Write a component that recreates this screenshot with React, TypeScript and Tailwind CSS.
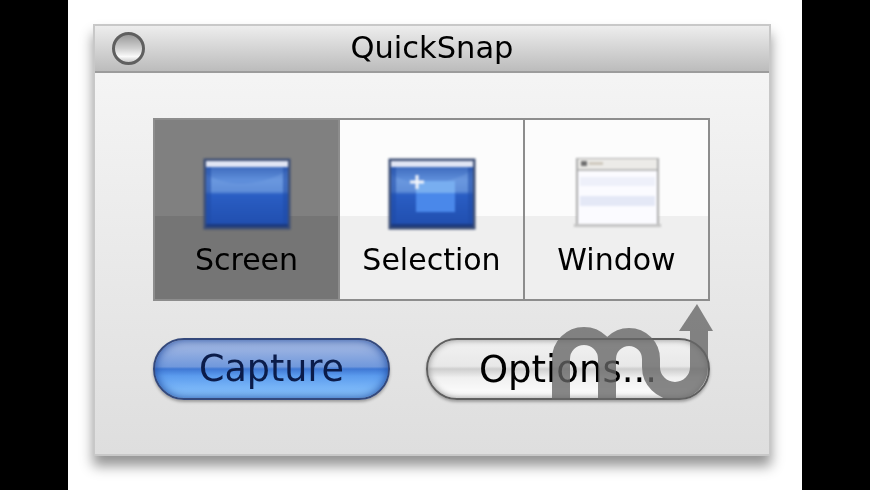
import { memo } from 'react'

const labelFont = "font-['DejaVu_Sans',sans-serif]"

type IconProps = { id: string; selection?: boolean }

const ScreenIcon = memo(({ id, selection }: IconProps) => (
    <svg width="88" height="72" viewBox="0 0 88 72" className="blur-[0.8px]">
        <defs>
            <linearGradient id={`${id}-sky`} x1="0" y1="0" x2="0" y2="1">
                <stop offset="0" stopColor="#3f6cbe" />
                <stop offset="0.22" stopColor="#5f8fdb" />
                <stop offset="0.42" stopColor="#5080d2" />
                <stop offset="0.46" stopColor="#2a5ec4" />
                <stop offset="1" stopColor="#204eae" />
            </linearGradient>
        </defs>
        <rect x="0.5" y="0.5" width="87" height="71" fill="#3d4e74" />
        <rect x="3" y="3" width="82" height="6" fill="#e0e5f4" />
        <rect x="3" y="9" width="82" height="60" fill={`url(#${id}-sky)`} />
        <path d="M3 16 C24 30 60 28 85 12 V34 H3 Z" fill="#8db2ec" opacity="0.25" />
        <rect x="3" y="9" width="5" height="60" fill="#1f4aa6" opacity="0.55" />
        <rect x="80" y="9" width="5" height="60" fill="#1f4aa6" opacity="0.55" />
        <rect x="3" y="66" width="82" height="3" fill="#1b3a80" />
        {selection && (
            <>
                <rect x="28" y="23" width="39" height="31" fill="#4a88ea" />
                <rect x="28" y="23" width="39" height="12" fill="#78aef0" />
                <path d="M29 17 V31 M22 24 H36" stroke="#f4f6fb" strokeWidth="3" />
            </>
        )}
    </svg>
))
ScreenIcon.displayName = 'ScreenIcon'

const WindowIcon = memo(() => (
    <svg width="88" height="72" viewBox="0 0 88 72" className="blur-[0.9px]">
        <rect x="4" y="0" width="81" height="68" fill="#fbfbff" stroke="#ababab" strokeWidth="2" />
        <rect x="5" y="1" width="79" height="10" fill="#ecebe8" />
        <rect x="8" y="3" width="6" height="5" fill="#6f6f6f" />
        <rect x="16" y="4" width="14" height="3" fill="#cfc9be" />
        <rect x="5" y="11" width="79" height="2" fill="#bcbcbc" />
        <rect x="7" y="19" width="75" height="9" fill="#eef0fa" />
        <rect x="7" y="38" width="75" height="10" fill="#e4e8f6" />
        <rect x="1" y="66" width="87" height="3" fill="#c4c4c4" />
    </svg>
))
WindowIcon.displayName = 'WindowIcon'

type ModeCellProps = { label: string; active?: boolean; children: React.ReactNode }

const ModeCell: React.FC<ModeCellProps> = ({ label, active, children }) => (
    <div
        className={`flex flex-1 flex-col items-center pt-[38px] ${
            active
                ? 'bg-[linear-gradient(#808080_0,#808080_96px,#757575_96px,#757575_100%)]'
                : 'bg-[linear-gradient(#fcfcfc_0,#fcfcfc_96px,#efefef_96px,#efefef_100%)]'
        }`}
    >
        {children}
        <span className={`mt-[10px] text-[30px] leading-[40px] text-black blur-[0.5px] ${labelFont}`}>{label}</span>
    </div>
)

export default function App() {
    return (
        <div className="relative flex h-[490px] w-[870px] overflow-hidden bg-black">
            <div className="ml-[68px] h-full w-[734px] bg-white pl-[25px] pt-[24px]">
                <div className="flex h-[432px] w-[678px] flex-col border-2 border-[#c8c8c8] bg-[linear-gradient(#f7f7f7,#dedede)] shadow-[0_10px_12px_rgba(0,0,0,0.42)]">
                    <div className="grid h-[47px] shrink-0 grid-cols-[1fr_auto_1fr] items-center border-b-2 border-[#9c9c9c] bg-[linear-gradient(#ededed,#bcbcbc)]">
                        <div className="ml-[17px] h-[33px] w-[33px] rounded-full border-[3px] border-[#5f5f5f] bg-[linear-gradient(#9a9a9a,#d0d0d0_50%,#fafafa_80%,#c8c8c8)] blur-[0.6px]" />
                        <span className={`text-[30.5px] leading-none text-black blur-[0.5px] ${labelFont}`}>QuickSnap</span>
                        <div />
                    </div>
                    <div className="flex flex-col pl-[58px] pr-[59px] pt-[45px]">
                        <div className="flex h-[183px] gap-[2px] border-2 border-[#8d8d8d] bg-[#8d8d8d]">
                            <ModeCell label="Screen" active>
                                <ScreenIcon id="screen" />
                            </ModeCell>
                            <ModeCell label="Selection">
                                <ScreenIcon id="selection" selection />
                            </ModeCell>
                            <ModeCell label="Window">
                                <WindowIcon />
                            </ModeCell>
                        </div>
                        <div className="mt-[37px] flex justify-between">
                            <button className="h-[62px] w-[237px] rounded-full border-2 border-[#34497c] bg-[linear-gradient(#aebfe4,#7098dc_46%,#3f78d4_50%,#5c9cee_62%,#90caff)] shadow-[0_2px_3px_rgba(0,0,0,0.3),inset_0_0_10px_#1d4aa0] blur-[0.7px]">
                                <span className={`text-[36.5px] leading-none text-[#0b1c4a] ${labelFont}`}>Capture</span>
                            </button>
                            <button className="h-[62px] w-[284px] rounded-full border-2 border-[#5f5f5f] bg-[linear-gradient(#f2f2f2,#e8e8e8_45%,#cecece_50%,#f0f0f0_65%,#ffffff)] shadow-[0_2px_3px_rgba(0,0,0,0.3),inset_0_0_6px_#8c8c8c] blur-[0.7px]">
                                <span className={`text-[37px] leading-none text-black ${labelFont}`}>Options...</span>
                            </button>
                        </div>
                    </div>
                </div>
            </div>
            {/* watermark sits over the Options button */}
            <svg className="absolute left-0 top-0 blur-[0.7px]" width="870" height="490" viewBox="0 0 870 490">
                <g opacity="0.78" fill="none" stroke="#666" strokeWidth="18">
                    <path d="M561 400 V359 A23 23 0 0 1 607 359 V400 M607 359 A22 22 0 0 1 651 359 V367 A24 24 0 0 0 699 367 V328" />
                    <polygon points="697,304 713,331 679,331" fill="#666" stroke="none" />
                </g>
            </svg>
        </div>
    )
}
